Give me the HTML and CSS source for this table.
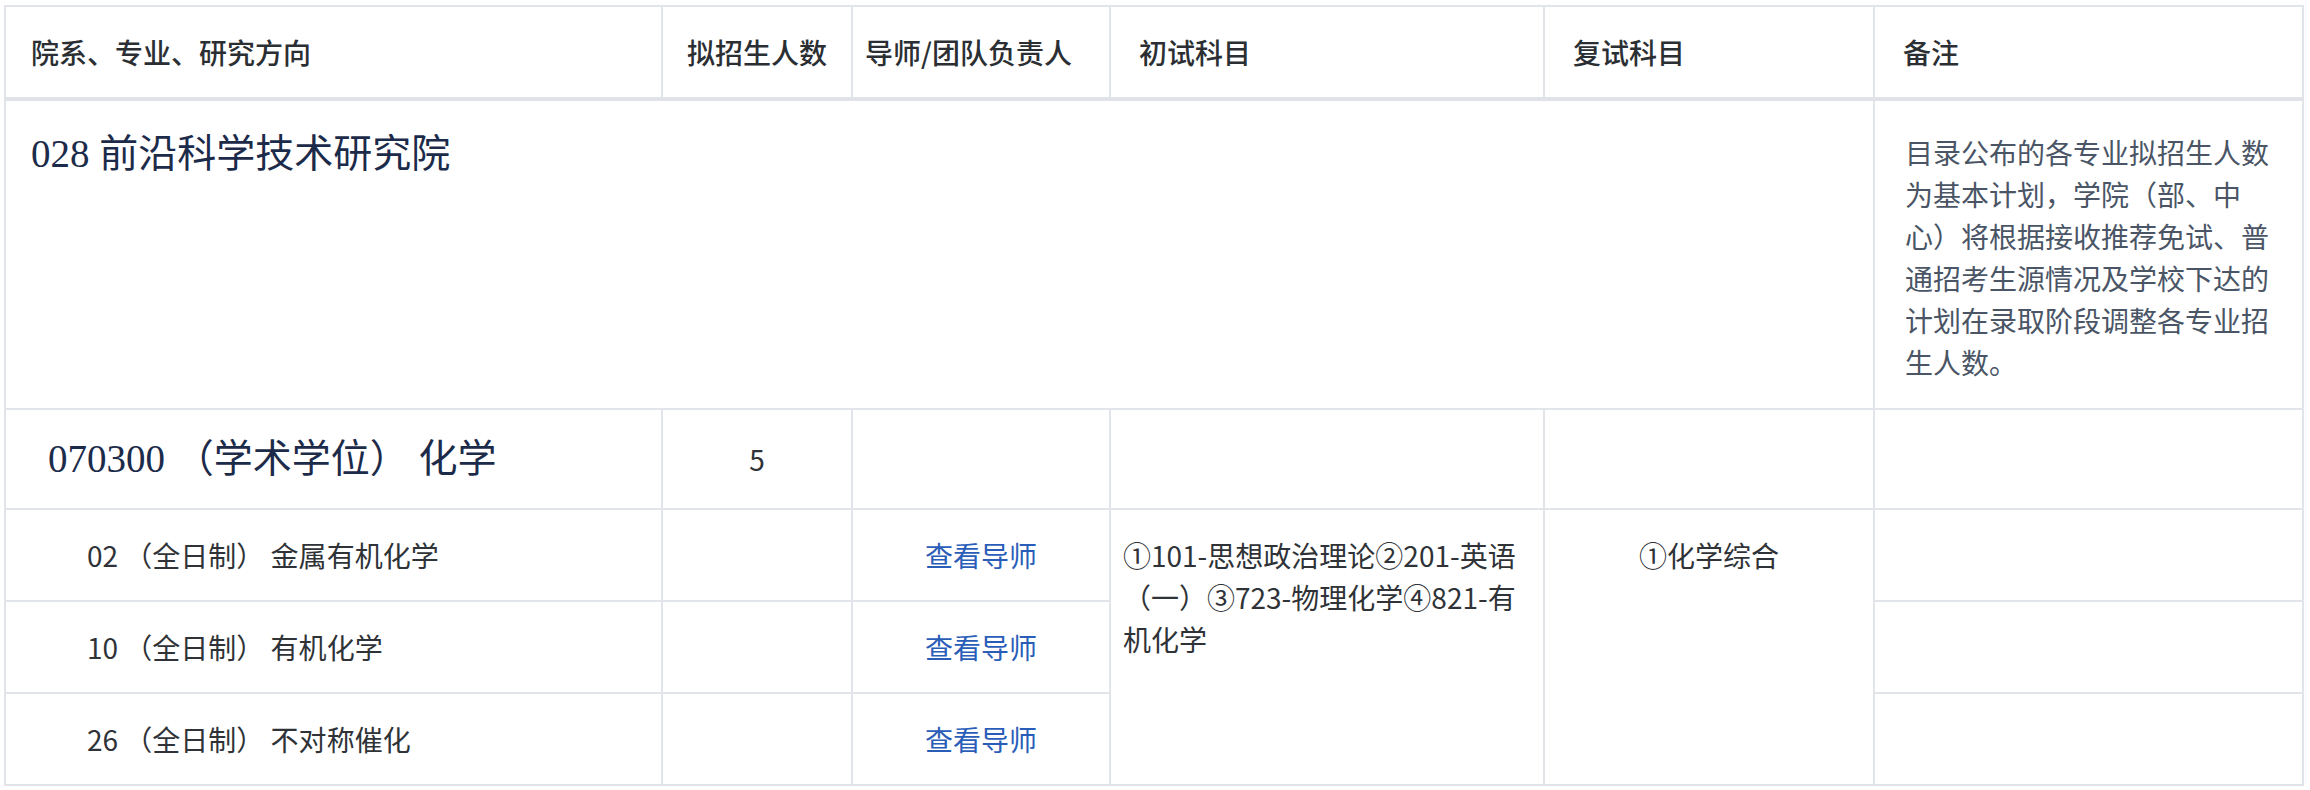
FILE: index.html
```html
<!DOCTYPE html>
<html lang="zh-CN">
<head>
<meta charset="utf-8">
<title>招生专业目录</title>
<link rel="stylesheet" href="styles.css">
</head>
<body>
<div class="page">
  <table class="catalog">
    <colgroup>
      <col class="c-name">
      <col class="c-num">
      <col class="c-tutor">
      <col class="c-exam">
      <col class="c-retest">
      <col class="c-remark">
    </colgroup>
    <thead>
      <tr>
        <th class="h-name">院系、专业、研究方向</th>
        <th class="h-num">拟招生人数</th>
        <th class="h-tutor">导师/团队负责人</th>
        <th>初试科目</th>
        <th>复试科目</th>
        <th>备注</th>
      </tr>
    </thead>
    <tbody>
      <tr class="college">
        <td class="college-name" colspan="5">028 前沿科学技术研究院</td>
        <td class="remark">目录公布的各专业拟招生人数为基本计划，学院（部、中心）将根据接收推荐免试、普通招考生源情况及学校下达的计划在录取阶段调整各专业招生人数。</td>
      </tr>
      <tr class="major">
        <td class="major-name">070300 （学术学位） 化学</td>
        <td class="num">5</td>
        <td></td>
        <td></td>
        <td></td>
        <td></td>
      </tr>
      <tr class="dir">
        <td class="dir-name">02 （全日制） 金属有机化学</td>
        <td></td>
        <td class="tutor"><a class="tutor-link" href="#">查看导师</a></td>
        <td class="exam" rowspan="3">①101-思想政治理论②201-英语（一）③723-物理化学④821-有机化学</td>
        <td class="retest" rowspan="3">①化学综合</td>
        <td></td>
      </tr>
      <tr class="dir">
        <td class="dir-name">10 （全日制） 有机化学</td>
        <td></td>
        <td class="tutor"><a class="tutor-link" href="#">查看导师</a></td>
        <td></td>
      </tr>
      <tr class="dir">
        <td class="dir-name">26 （全日制） 不对称催化</td>
        <td></td>
        <td class="tutor"><a class="tutor-link" href="#">查看导师</a></td>
        <td></td>
      </tr>
    </tbody>
  </table>
</div>
</body>
</html>
```
FILE: styles.css
```css
html, body {
  margin: 0;
  padding: 0;
  background: #ffffff;
}

.page {
  padding: 5px 0 0 4px;
}

.catalog {
  border-collapse: collapse;
  table-layout: fixed;
  width: 2300px;
  font-family: "Noto Sans CJK SC", "Noto Sans", sans-serif;
  font-size: 28px;
  line-height: 42px;
  color: #2f3337;
}

.c-name { width: 657px; }
.c-num { width: 190px; }
.c-tutor { width: 258px; }
.c-exam { width: 434px; }
.c-retest { width: 330px; }
.c-remark { width: 429px; }

.catalog th,
.catalog td {
  border: 2px solid #e1e4e8;
  padding: 24px 12px;
  vertical-align: middle;
  text-align: left;
}

.catalog th {
  font-weight: 500;
  color: #2b2f33;
  border-bottom: 4px solid #dfe2e6;
  padding: 24px 12px 24px 28px;
  white-space: nowrap;
}

.catalog th.h-name {
  padding-left: 25px;
}

.catalog th.h-num {
  padding-left: 24px;
}

.catalog th.h-tutor {
  padding-left: 12px;
}

.catalog .college td {
  vertical-align: top;
}

.catalog td.college-name {
  font-family: "Liberation Serif", "Noto Sans CJK SC", serif;
  font-size: 39px;
  line-height: 58px;
  color: #1c2b4a;
  padding: 24px 25px;
}

.catalog td.remark {
  color: #4a5566;
  padding: 30px 30px 25px 30px;
}

.catalog td.major-name {
  font-family: "Liberation Serif", "Noto Sans CJK SC", serif;
  font-size: 39px;
  line-height: 48px;
  color: #1c2b4a;
  padding: 25px 12px 25px 42px;
}

.catalog td.num {
  text-align: center;
}

.catalog td.dir-name {
  padding-left: 81px;
}

.catalog td.tutor {
  text-align: center;
}

.tutor-link {
  color: #2a5db8;
  text-decoration: none;
}

.catalog td.exam {
  vertical-align: top;
  padding: 24px 14px 24px 12px;
}

.catalog td.retest {
  vertical-align: top;
  text-align: center;
}
```
